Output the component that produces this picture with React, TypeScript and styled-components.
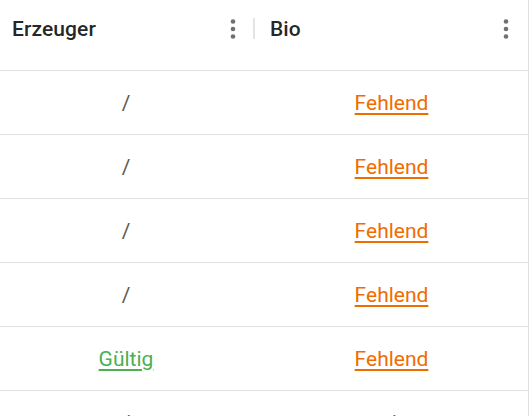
import React from "react";
import styled, { createGlobalStyle } from "styled-components";

const Global = createGlobalStyle`
  html, body { margin: 0; padding: 0; background: #fff; overflow: hidden; }
  body { font-family: Roboto, "Liberation Sans", Arial, sans-serif; }
`;

const Grid = styled.div`
  width: 528px;
  height: 416px;
  border-right: 1px solid #e0e0e0;
  overflow: hidden;
  background: #fff;
`;

const HeaderRow = styled.div`
  display: grid;
  grid-template-columns: 256px 272px;
  height: 70px;
`;

const HeaderCell = styled.div<{ $padLeft: number }>`
  display: flex;
  align-items: center;
  height: 57px;
  padding-left: ${(p) => p.$padLeft}px;
  padding-right: 12px;
  box-sizing: border-box;
`;

const Title = styled.span`
  flex: 1;
  font-size: 21px;
  font-weight: 500;
  color: rgba(0, 0, 0, 0.87);
  letter-spacing: 0.1px;
`;

const KebabButton = styled.span`
  display: flex;
  width: 20px;
  height: 30px;
  align-items: center;
  justify-content: center;
`;

const SeparatorWrap = styled.span`
  display: flex;
  align-items: center;
  width: 13px;
  height: 30px;
  margin-right: -12px;
`;

const SeparatorBar = styled.span`
  display: block;
  width: 2px;
  height: 21px;
  margin-left: 10px;
  background: #e4e4e4;
`;

const Row = styled.div`
  display: grid;
  grid-template-columns: 256px 272px;
  height: 64px;
  border-top: 1px solid #e0e0e0;
  box-sizing: border-box;
`;

const Cell = styled.div<{ $padRight?: number }>`
  display: flex;
  align-items: center;
  justify-content: center;
  padding-right: ${(p) => p.$padRight ?? 0}px;
  font-size: 21px;
`;

const Plain = styled.span`
  color: #5a5a5a;
`;

const Status = styled.a<{ $color: string }>`
  color: ${(p) => p.$color};
  text-decoration: underline;
  text-decoration-thickness: 2px;
  text-underline-offset: 3px;
  cursor: pointer;
`;

const Kebab = () => (
  <KebabButton>
    <svg width="8" height="24" viewBox="0 0 8 24">
      <circle cx="4" cy="4.5" r="2.3" fill="#707070" />
      <circle cx="4" cy="12" r="2.3" fill="#707070" />
      <circle cx="4" cy="19.5" r="2.3" fill="#707070" />
    </svg>
  </KebabButton>
);

type Val = { kind: "none" } | { kind: "ok" } | { kind: "missing" };

const rows: [Val, Val][] = [
  [{ kind: "none" }, { kind: "missing" }],
  [{ kind: "none" }, { kind: "missing" }],
  [{ kind: "none" }, { kind: "missing" }],
  [{ kind: "none" }, { kind: "missing" }],
  [{ kind: "ok" }, { kind: "missing" }],
  [{ kind: "none" }, { kind: "none" }],
];

const Value = ({ v }: { v: Val }) => {
  if (v.kind === "ok") return <Status $color="#4caf50">Gültig</Status>;
  if (v.kind === "missing") return <Status $color="#ef6c00">Fehlend</Status>;
  return <Plain>/</Plain>;
};

export default function App() {
  return (
    <>
      <Global />
      <Grid>
        <HeaderRow>
          <HeaderCell $padLeft={12}>
            <Title>Erzeuger</Title>
            <Kebab />
            <SeparatorWrap>
              <SeparatorBar />
            </SeparatorWrap>
          </HeaderCell>
          <HeaderCell $padLeft={14}>
            <Title>Bio</Title>
            <Kebab />
          </HeaderCell>
        </HeaderRow>
        {rows.map((r, i) => (
          <Row key={i}>
            <Cell $padRight={4}>
              <Value v={r[0]} />
            </Cell>
            <Cell $padRight={1}>
              <Value v={r[1]} />
            </Cell>
          </Row>
        ))}
      </Grid>
    </>
  );
}
